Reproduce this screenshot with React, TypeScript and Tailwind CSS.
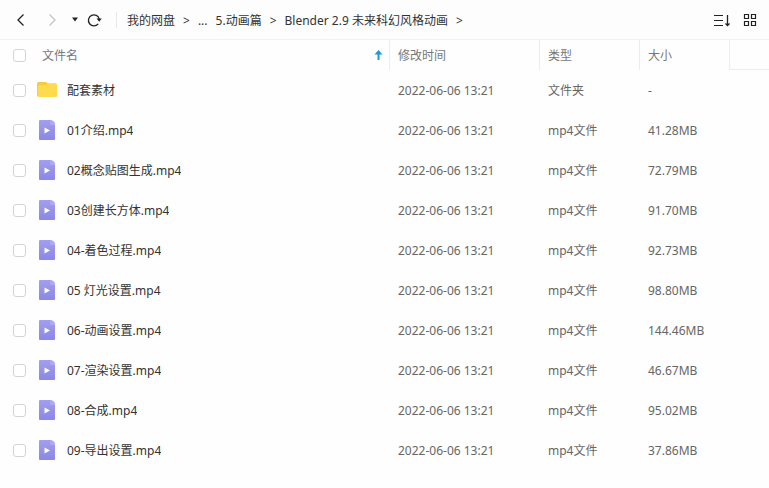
const files = [
  { name: '配套素材', folder: true, type: '文件夹', size: '-' },
  { name: '01介绍.mp4', type: 'mp4文件', size: '41.28MB' },
  { name: '02概念贴图生成.mp4', type: 'mp4文件', size: '72.79MB' },
  { name: '03创建长方体.mp4', type: 'mp4文件', size: '91.70MB' },
  { name: '04-着色过程.mp4', type: 'mp4文件', size: '92.73MB' },
  { name: '05 灯光设置.mp4', type: 'mp4文件', size: '98.80MB' },
  { name: '06-动画设置.mp4', type: 'mp4文件', size: '144.46MB' },
  { name: '07-渲染设置.mp4', type: 'mp4文件', size: '46.67MB' },
  { name: '08-合成.mp4', type: 'mp4文件', size: '95.02MB' },
  { name: '09-导出设置.mp4', type: 'mp4文件', size: '37.86MB' },
];

function FolderIcon() {
  return (
    <svg width="20" height="16" viewBox="0 0 20 16" className="shrink-0">
      <path
        d="M0 1.5A1.5 1.5 0 0 1 1.5 0h7.2c.7 0 1.1.3 1.5.8l.6.7h7.7A1.5 1.5 0 0 1 20 3v10a1.5 1.5 0 0 1-1.5 1.5h-17A1.5 1.5 0 0 1 0 13z"
        fill="#f3cb45"
      />
      <path
        d="M1 4.5A1.5 1.5 0 0 1 2.5 3h6.3l1.5-1.5h8.2A1.5 1.5 0 0 1 20 3v10.500a1.5 1.5 0 0 1-1.5 1.5h-16A1.5 1.5 0 0 1 1 13.5z"
        fill="#fedb4c"
      />
    </svg>
  );
}

function VideoIcon() {
  return (
    <svg width="20" height="20" viewBox="0 0 20 20" className="shrink-0">
      <defs>
        <linearGradient id="video" x1="0" y1="0" x2="0" y2="1">
          <stop offset="0" stopColor="#a39fec" />
          <stop offset="1" stopColor="#8b86e8" />
        </linearGradient>
      </defs>
      <path
        d="M3 0h10c3 .3 5 2.300 5 5v14a1 1 0 0 1-1 1H3a1 1 0 0 1-1-1V1a1 1 0 0 1 1-1z"
        fill="url(#video)"
      />
      <path d="M13 0c3 .3 5 2.300 5 5h-3.500A1.5 1.5 0 0 1 13 3.500z" fill="#aeaaf2" />
      <path d="M7.500 7.500v6l5.500-3z" fill="#fff" />
    </svg>
  );
}

function Checkbox({ label }: { label: string }) {
  return (
    <input
      type="checkbox"
      aria-label={label}
      className="size-[13px] shrink-0 appearance-none rounded-[3px] border border-[#d3d3d3] bg-white checked:bg-sky-500"
    />
  );
}

function Toolbar() {
  return (
    <header className="flex h-10 items-center border-b border-[#f1f1f1] bg-[#fdfdfd] px-3">
      <button aria-label="后退" className="flex size-5 items-center justify-center">
        <svg width="16" height="16" viewBox="0 0 16 16" fill="none" stroke="#222" strokeWidth="1.3">
          <path d="M9.500 2.500L4 8l5.500 5.500" />
        </svg>
      </button>
      <button aria-label="前进" className="ml-2.5 flex size-5 items-center justify-center">
        <svg width="16" height="16" viewBox="0 0 16 16" fill="none" stroke="#c4c4c4" strokeWidth="1.3">
          <path d="M5.500 2.500L11 8l-5.500 5.500" />
        </svg>
      </button>
      <button aria-label="历史记录" className="ml-2 flex h-5 w-2.5 items-center justify-center">
        <svg width="6" height="5" viewBox="0 0 6 5" fill="#222">
          <path d="M0 .5h6L3 4.500z" />
        </svg>
      </button>
      <button aria-label="刷新" className="ml-1 flex size-5 items-center justify-center">
        <svg width="16" height="16" viewBox="0 0 16 16" fill="none" stroke="#222" strokeWidth="1.3">
          <path d="M12.200 11.800A5.500 5.500 0 1 1 13.300 7.200" />
          <path d="M10.500 6.500h5.300l-2.600 3.200z" fill="#222" stroke="none" />
        </svg>
      </button>
      <span className="ml-3 h-4 w-px bg-[#e8e8e8]" />
      <nav className="ml-2.5 flex min-w-0 flex-1 items-center gap-2 pt-0.5 whitespace-nowrap text-[#333333]">
        <a href="#root">我的网盘</a>
        <span>&gt;</span>
        <a href="#parent">...</a>
        <a href="#animation">5.动画篇</a>
        <span>&gt;</span>
        <a href="#blender">Blender 2.9 未来科幻风格动画</a>
        <span>&gt;</span>
      </nav>
      <div className="flex items-center gap-3">
        <button aria-label="排序">
          <svg width="17" height="14" viewBox="0 0 17 14" fill="none" stroke="#222" className="block">
            <path d="M0 2.500h9M0 7.500h9M0 12.500h9" strokeWidth="1.2" />
            <path d="M13.500 2v10.500M11.500 10.500l2 2 2-2" strokeWidth="1.3" />
          </svg>
        </button>
        <button aria-label="网格视图">
          <svg width="14" height="14" viewBox="0 0 14 14" fill="none" stroke="#222" className="block">
            <path d="M1.500 1.500h4v4h-4zM8.500 1.500h4v4h-4zM1.500 8.500h4v4h-4zM8.500 8.500h4v4h-4z" strokeWidth="1.2" />
          </svg>
        </button>
      </div>
    </header>
  );
}

export default function App() {
  return (
    <div className="min-h-screen bg-[#fefefe] font-['Noto_Sans','Noto_Sans_CJK_SC',sans-serif] text-xs text-[#666666]">
      <Toolbar />
      <table className="w-full table-fixed border-separate border-spacing-0 text-left">
        <colgroup>
          <col />
          <col className="w-[150px]" />
          <col className="w-[100px]" />
          <col className="w-[90px]" />
          <col className="w-10" />
        </colgroup>
        <thead>
          <tr className="h-[30px] text-[#777777]">
            <th className="p-0 pr-1.5 pl-[13px] font-normal">
              <div className="flex items-center">
                <Checkbox label="全选" />
                <span className="ml-4 flex-1 pt-0.5">文件名</span>
                <svg width="9" height="10" viewBox="0 0 9 10" fill="#1d9ad6">
                  <path d="M4.500 0L8.500 4.500H5.500V10h-2V4.500h-3z" />
                </svg>
              </div>
            </th>
            <th className="border-l border-[#ececec] p-0 pt-0.5 pl-2 font-normal">修改时间</th>
            <th className="border-l border-[#ececec] p-0 pt-0.5 pl-2 font-normal">类型</th>
            <th className="border-l border-[#ececec] p-0 pt-0.5 pl-2 font-normal">大小</th>
            <td className="border-b border-l border-[#ececec] p-0" />
          </tr>
        </thead>
        <tbody>
          {files.map((file) => (
            <tr key={file.name} className="h-10">
              <td className="p-0 pl-[13px]">
                <div className="flex items-center">
                  <Checkbox label={file.name} />
                  <span className="ml-[11px] flex">
                    {file.folder ? <FolderIcon /> : <VideoIcon />}
                  </span>
                  <span className="ml-2.5 truncate pt-0.5 text-[#333333]">{file.name}</span>
                </div>
              </td>
              <td className="p-0 pt-0.5 pl-[9px]">2022-06-06 13:21</td>
              <td className="p-0 pt-0.5 pl-[9px]">{file.type}</td>
              <td className="p-0 pt-0.5 pl-[9px]">{file.size}</td>
              <td className="p-0" />
            </tr>
          ))}
        </tbody>
      </table>
    </div>
  );
}
